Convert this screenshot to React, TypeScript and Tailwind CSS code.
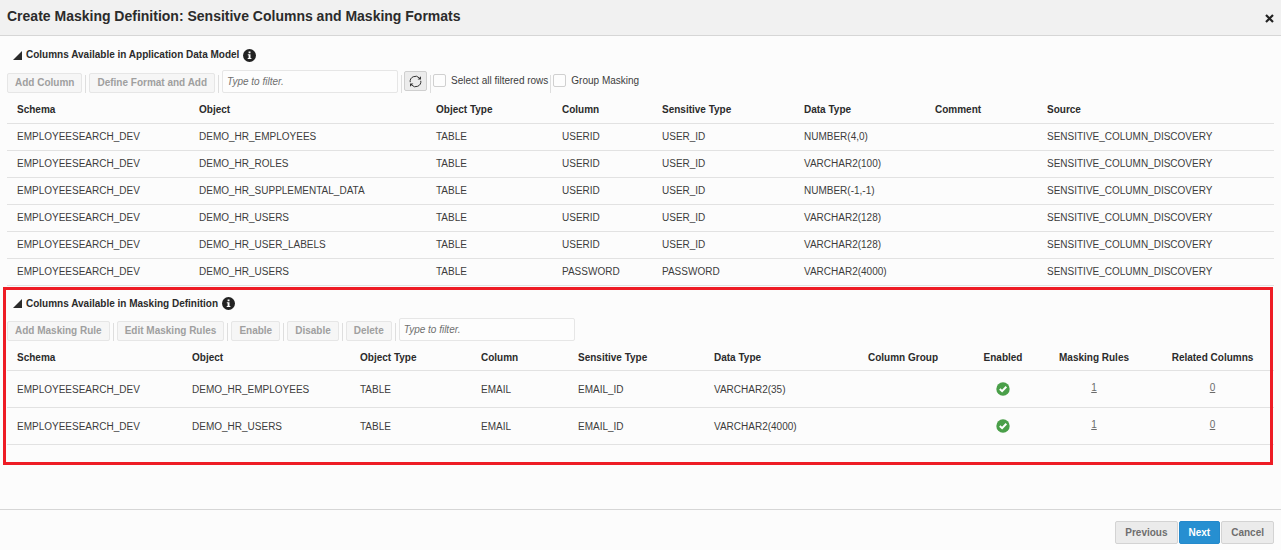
import type { ReactNode } from "react";

const availableHeaders = [
  { label: "Schema", width: "w-[182px]" },
  { label: "Object", width: "w-[237px]" },
  { label: "Object Type", width: "w-[126px]" },
  { label: "Column", width: "w-[100px]" },
  { label: "Sensitive Type", width: "w-[142px]" },
  { label: "Data Type", width: "w-[131px]" },
  { label: "Comment", width: "w-[112px]" },
  { label: "Source", width: "w-[237px]" },
];

const availableRows = [
  ["DEMO_HR_EMPLOYEES", "USERID", "USER_ID", "NUMBER(4,0)"],
  ["DEMO_HR_ROLES", "USERID", "USER_ID", "VARCHAR2(100)"],
  ["DEMO_HR_SUPPLEMENTAL_DATA", "USERID", "USER_ID", "NUMBER(-1,-1)"],
  ["DEMO_HR_USERS", "USERID", "USER_ID", "VARCHAR2(128)"],
  ["DEMO_HR_USER_LABELS", "USERID", "USER_ID", "VARCHAR2(128)"],
  ["DEMO_HR_USERS", "PASSWORD", "PASSWORD", "VARCHAR2(4000)"],
];

const maskingHeaders = [
  { label: "Schema", width: "w-[175px]" },
  { label: "Object", width: "w-[168px]" },
  { label: "Object Type", width: "w-[121px]" },
  { label: "Column", width: "w-[97px]" },
  { label: "Sensitive Type", width: "w-[136px]" },
  { label: "Data Type", width: "w-[154px]" },
  { label: "Column Group", width: "w-[111px]" },
  { label: "Enabled", width: "w-[68px]", center: true },
  { label: "Masking Rules", width: "w-[114px]", center: true },
  { label: "Related Columns", width: "w-[123px]", center: true },
];

const maskingRows = [
  ["DEMO_HR_EMPLOYEES", "VARCHAR2(35)"],
  ["DEMO_HR_USERS", "VARCHAR2(4000)"],
];

type Header = { label: string; width: string; center?: boolean };

function HeaderRow({ headers }: { headers: Header[] }) {
  return (
    <thead>
      <tr className="h-[26px] border-b border-[#e2e2e2]">
        {headers.map((h) => (
          <th
            key={h.label}
            scope="col"
            className={`${h.width} ${h.center ? "text-center" : "pl-[10px] text-left"} pt-px font-bold text-[#2b2b2b]`}
          >
            {h.label}
          </th>
        ))}
      </tr>
    </thead>
  );
}

function Cell({ children }: { children?: ReactNode }) {
  return <td className="pt-px pl-[10px]">{children}</td>;
}

function SectionTitle({ children }: { children: ReactNode }) {
  return (
    <div className="flex h-[20px] items-center gap-[4px] pl-[6px]">
      <svg width="9" height="9" viewBox="0 0 9 9" aria-hidden="true">
        <path d="M9 0V9H0Z" fill="#2b2b2b" />
      </svg>
      <h2 className="font-bold text-[#2b2b2b]">{children}</h2>
      <svg width="13" height="13" viewBox="0 0 13 13" aria-hidden="true">
        <circle cx="6.5" cy="6.5" r="6.5" fill="#222" />
        <path d="M5.6 2.6H7.5V4.3H5.6ZM4.8 5.2H7.5V8.9H8.4V10H4.7V8.9H5.6V6.3H4.8Z" fill="#fff" />
      </svg>
    </div>
  );
}

function DisabledButton({ children }: { children: ReactNode }) {
  return (
    <button
      type="button"
      disabled
      className="h-[20px] rounded-[2px] border border-[#e6e6e6] bg-[#f6f6f6] px-[7px] font-bold text-[#9f9f9f]"
    >
      {children}
    </button>
  );
}

function Separator() {
  return <span className="h-[18px] w-px bg-[#dedede]" />;
}

function Filter({ label }: { label: string }) {
  return (
    <input
      type="text"
      aria-label={label}
      placeholder="Type to filter."
      className="h-[23px] w-[176px] rounded-[2px] border border-[#e6e6e6] bg-[#fdfdfd] px-[4px] outline-none placeholder:text-[#707070] placeholder:italic"
    />
  );
}

function Check({ label }: { label: string }) {
  return (
    <label className="flex h-[21px] items-center gap-[5px] self-start text-[#3c3c3c]">
      <input
        type="checkbox"
        className="size-[13px] appearance-none rounded-[2px] border border-[#d0d0d0] bg-[#fdfdfd]"
      />
      {label}
    </label>
  );
}

function RefreshIcon() {
  return (
    <svg width="13" height="13" viewBox="0 0 13 13" fill="none" stroke="#333" strokeWidth="1" aria-hidden="true">
      <path d="M1.2 7.2A5.3 5.3 0 0 1 10.4 3M11.8 5.8A5.3 5.3 0 0 1 2.6 10" />
      <path d="M12 1.2V4.6H8.6Z" fill="#333" stroke="none" />
      <path d="M1 11.8V8.4H4.4Z" fill="#333" stroke="none" />
    </svg>
  );
}

function EnabledIcon() {
  return (
    <svg width="14" height="14" viewBox="0 0 14 14" className="mx-auto block" role="img" aria-label="Enabled">
      <circle cx="7" cy="7" r="6.7" fill="#4a9f49" />
      <path d="M3.8 7L6.1 9.2L10.3 4.8" fill="none" stroke="#fff" strokeWidth="2" />
    </svg>
  );
}

function CountLink({ children }: { children: ReactNode }) {
  return (
    <td className="pb-[3px] text-center">
      <a href="#" className="text-[#6b6b6b] underline">
        {children}
      </a>
    </td>
  );
}

export default function App() {
  return (
    <div className="flex min-h-screen flex-col bg-[#fcfcfc] font-['Liberation_Sans',Arial,sans-serif] text-[10px] leading-[14px] text-[#3c3c3c]">
      <header className="flex h-[36px] items-center justify-between border-b border-[#d6d6d6] bg-[#f1f1f1] px-[7px]">
        <h1 className="pb-[4px] text-[14px] leading-[18px] font-bold text-[#2b2b2b]">
          Create Masking Definition: Sensitive Columns and Masking Formats
        </h1>
        <button type="button" aria-label="Close" className="pt-[2px]">
          <svg width="9" height="9" viewBox="0 0 9 9" aria-hidden="true">
            <path d="M1 1L8 8M8 1L1 8" stroke="#222" strokeWidth="2.2" />
          </svg>
        </button>
      </header>

      <main className="flex-1 px-[7px] pt-[9px]">
        <section>
          <SectionTitle>Columns Available in Application Data Model</SectionTitle>
          <div className="mt-[5px] flex h-[23px] items-end gap-[3px]">
            <DisabledButton>Add Column</DisabledButton>
            <Separator />
            <DisabledButton>Define Format and Add</DisabledButton>
            <Separator />
            <Filter label="Filter available columns" />
            <div className="flex h-[23px] items-end gap-[2px]">
              <Separator />
              <button
                type="button"
                aria-label="Refresh"
                className="mt-px flex h-[20px] w-[23px] items-center justify-center self-start rounded-[2px] border border-[#cfcfcf] bg-[#ececec]"
              >
                <RefreshIcon />
              </button>
            </div>
            <div className="flex h-[23px] items-end gap-[2px]">
              <Separator />
              <Check label="Select all filtered rows" />
              <Separator />
              <Check label="Group Masking" />
            </div>
          </div>
          <table className="mt-[4px] w-full table-fixed border-collapse">
            <HeaderRow headers={availableHeaders} />
            <tbody>
              {availableRows.map(([object, column, type, data], i) => (
                <tr key={i} className="h-[27px] border-b border-[#e2e2e2]">
                  <Cell>EMPLOYEESEARCH_DEV</Cell>
                  <Cell>{object}</Cell>
                  <Cell>TABLE</Cell>
                  <Cell>{column}</Cell>
                  <Cell>{type}</Cell>
                  <Cell>{data}</Cell>
                  <Cell />
                  <Cell>SENSITIVE_COLUMN_DISCOVERY</Cell>
                </tr>
              ))}
            </tbody>
          </table>
        </section>

        <section className="relative pt-[8px] pb-[20px]">
          <SectionTitle>Columns Available in Masking Definition</SectionTitle>
          <div className="mt-[4px] flex h-[23px] items-end gap-[3px]">
            <DisabledButton>Add Masking Rule</DisabledButton>
            <Separator />
            <DisabledButton>Edit Masking Rules</DisabledButton>
            <Separator />
            <DisabledButton>Enable</DisabledButton>
            <Separator />
            <DisabledButton>Disable</DisabledButton>
            <Separator />
            <DisabledButton>Delete</DisabledButton>
            <Separator />
            <Filter label="Filter masking columns" />
          </div>
          <table className="mt-[4px] w-full table-fixed border-collapse">
            <HeaderRow headers={maskingHeaders} />
            <tbody>
              {maskingRows.map(([object, data]) => (
                <tr key={object} className="h-[37px] border-b border-[#e2e2e2]">
                  <Cell>EMPLOYEESEARCH_DEV</Cell>
                  <Cell>{object}</Cell>
                  <Cell>TABLE</Cell>
                  <Cell>EMAIL</Cell>
                  <Cell>EMAIL_ID</Cell>
                  <Cell>{data}</Cell>
                  <Cell />
                  <td>
                    <EnabledIcon />
                  </td>
                  <CountLink>1</CountLink>
                  <CountLink>0</CountLink>
                </tr>
              ))}
            </tbody>
          </table>
          <div className="pointer-events-none absolute top-px right-px bottom-0 -left-1 border-3 border-[#ee1c25]" />
        </section>
      </main>

      <footer className="flex h-[41px] items-start justify-end gap-px border-t border-[#d6d6d6] px-[7px] pt-[11px] font-bold">
        <button type="button" className="h-[23px] rounded-[2px] border border-[#d3d3d3] bg-[#ebebeb] px-[9px] text-[#6e6e6e]">
          Previous
        </button>
        <button type="button" className="h-[23px] rounded-[2px] border border-[#2489cb] bg-[#268fd1] px-[9px] text-white">
          Next
        </button>
        <button type="button" className="h-[23px] rounded-[2px] border border-[#d3d3d3] bg-[#ebebeb] px-[9px] text-[#6e6e6e]">
          Cancel
        </button>
      </footer>
    </div>
  );
}
